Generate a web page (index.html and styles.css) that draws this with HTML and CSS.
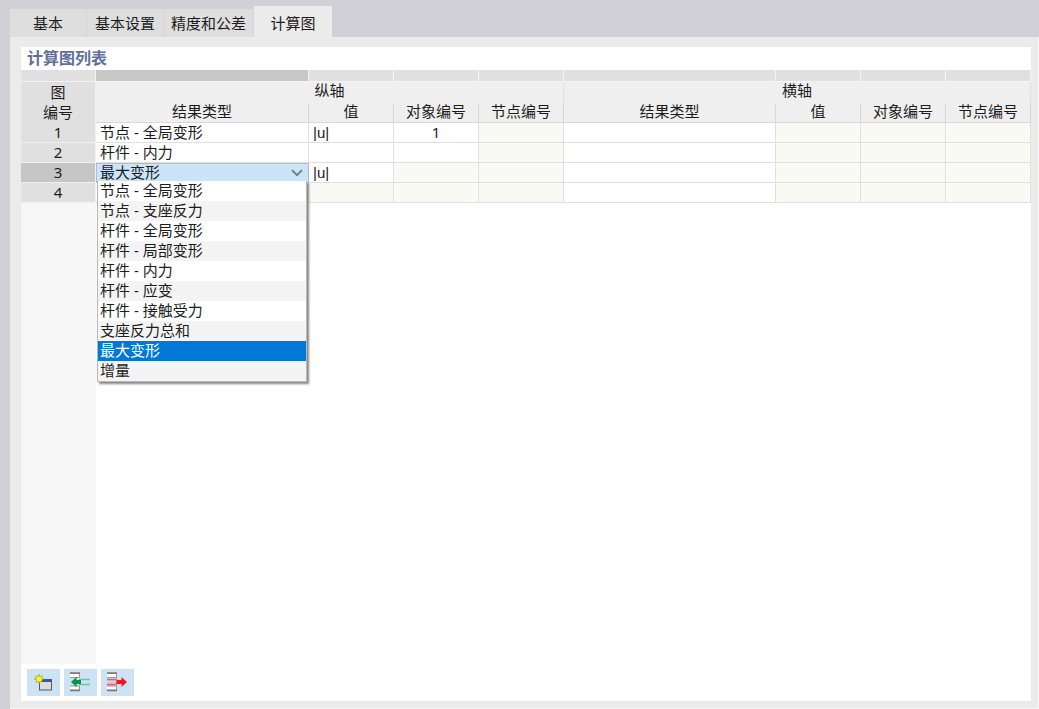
FILE: index.html
```html
<!DOCTYPE html>
<html lang="zh-CN">
<head>
<meta charset="utf-8">
<title>计算图</title>
<link rel="stylesheet" href="styles.css">
</head>
<body>
<div class="tabs" role="tablist">
  <button class="tab" role="tab">基本</button>
  <button class="tab" role="tab">基本设置</button>
  <button class="tab" role="tab">精度和公差</button>
  <button class="tab tab-active" role="tab" aria-selected="true">计算图</button>
</div>
<main class="page">
  <section class="panel">
    <h1 class="title">计算图列表</h1>
    <div class="grid-area">
      <table class="grid">
        <colgroup>
          <col class="c-no"><col class="c-first"><col class="c-val"><col class="c-val"><col class="c-val">
          <col class="c-type"><col class="c-val"><col class="c-val"><col class="c-val">
        </colgroup>
        <thead>
          <tr class="strip"><td></td><td class="current"></td><td></td><td></td><td></td><td></td><td></td><td></td><td></td></tr>
          <tr class="group"><th class="no" rowspan="2">图<br>编号</th><th colspan="4">纵轴</th><th colspan="4">横轴</th></tr>
          <tr class="names"><th>结果类型</th><th>值</th><th>对象编号</th><th>节点编号</th><th>结果类型</th><th>值</th><th>对象编号</th><th>节点编号</th></tr>
        </thead>
        <tbody>
          <tr><th class="no">1</th><td>节点 - 全局变形</td><td class="symbol">|u|</td><td class="center">1</td><td class="off"></td><td></td><td class="off"></td><td class="off"></td><td class="off"></td></tr>
          <tr><th class="no">2</th><td>杆件 - 内力</td><td></td><td></td><td class="off"></td><td></td><td class="off"></td><td class="off"></td><td class="off"></td></tr>
          <tr>
            <th class="no no-current">3</th>
            <td class="edit">
              <select class="combo" aria-label="结果类型"><option>最大变形</option></select>
              <svg class="chevron" width="12" height="8" viewBox="0 0 12 8"><path d="M1 1.2 6 6.2 11 1.2" fill="none" stroke="#707a84" stroke-width="1.8"/></svg>
              <ul class="menu" role="listbox" aria-label="结果类型">
                <li role="option">节点 - 全局变形</li>
                <li role="option">节点 - 支座反力</li>
                <li role="option">杆件 - 全局变形</li>
                <li role="option">杆件 - 局部变形</li>
                <li role="option">杆件 - 内力</li>
                <li role="option">杆件 - 应变</li>
                <li role="option">杆件 - 接触受力</li>
                <li role="option">支座反力总和</li>
                <li role="option" class="chosen" aria-selected="true">最大变形</li>
                <li role="option">增量</li>
              </ul>
            </td>
            <td class="symbol">|u|</td><td class="off"></td><td class="off"></td><td></td><td class="off"></td><td class="off"></td><td class="off"></td>
          </tr>
          <tr><th class="no">4</th><td></td><td class="off"></td><td class="off"></td><td class="off"></td><td></td><td class="off"></td><td class="off"></td><td class="off"></td></tr>
        </tbody>
      </table>
    </div>
    <div class="toolbar">
      <button class="tool" aria-label="新建">
        <svg width="33" height="27" viewBox="0 0 33 27">
          <rect x="12.500" y="10.500" width="12" height="10.500" fill="#dcdcdc" stroke="#55585f"/>
          <path d="M12 10h13v3H12z" fill="#3f568f"/>
          <path d="M12 5.500v9M7.500 10h9M9 7l6 6M15 7l-6 6" stroke="#b0a52c" stroke-width="1.800"/>
          <circle cx="12" cy="10" r="2.800" fill="#fbee3a"/>
        </svg>
      </button>
      <button class="tool" aria-label="插入行">
        <svg width="33" height="27" viewBox="0 0 33 27">
          <path d="M6 4.500h9.500v4H6M6 21h9.500v-4H6" fill="#fff" stroke="#969696"/>
          <path d="M6 4h10M6 21.500h10" stroke="#777" stroke-width="1.600"/>
          <path d="M15 10.500h11M15 15.500h11" stroke="#6fc69b" stroke-width="1.300"/>
          <path d="M7 13l5.500-5v3H17v4h-4.500v3z" fill="#079447"/>
        </svg>
      </button>
      <button class="tool" aria-label="删除行">
        <svg width="33" height="27" viewBox="0 0 33 27">
          <path d="M6 4.500h9.500v4H6M6 21h9.500v-4H6" fill="#fff" stroke="#969696"/>
          <path d="M6 4h10M6 21.500h10" stroke="#777" stroke-width="1.600"/>
          <path d="M6 10.500h9.500v5H6" fill="#d4d0df" stroke="#e0606a" stroke-width="1.300"/>
          <path d="M26 13l-5.500-5v3H16v4h4.500v3z" fill="#f5161c"/>
        </svg>
      </button>
    </div>
  </section>
</main>
</body>
</html>
```
FILE: styles.css
```css
* { box-sizing: border-box; }

body {
  margin: 0;
  height: 100vh;
  padding: 6px 0 0 10px;
  display: flex;
  flex-direction: column;
  background: #d1d0d6;
  color: #1c1c1c;
  font: 15px/20px "Noto Sans", "Noto Sans CJK SC", sans-serif;
}

button, select { font: inherit; color: inherit; }

.tabs { display: flex; align-items: flex-end; }

.tab {
  min-width: 77px;
  height: 28px;
  padding: 0 7px;
  border: 0;
  border-right: 1px solid #d5d5d5;
  background: #dedede;
}

.tab-active {
  min-width: 78px;
  height: 31px;
  padding-top: 2px;
  border-right: 0;
  background: #ebebeb;
}

.page {
  flex: 1;
  display: flex;
  padding: 10px 7px 7px 11px;
  background: #ebebeb;
  border: solid #f8f8f8;
  border-width: 0 1px 1px 0;
}

.panel {
  flex: 1;
  display: flex;
  flex-direction: column;
  background: #fff;
}

.title {
  margin: 0;
  padding: 0 6px;
  font-size: 16px;
  line-height: 23px;
  font-weight: 700;
  color: #5f7099;
}

.grid-area {
  flex: 1;
  background: linear-gradient(to right, #f7f7f7 75px, transparent 75px);
}

.grid {
  width: 100%;
  table-layout: fixed;
  border-collapse: separate;
  border-spacing: 0;
}

.c-no { width: 75px; }
.c-first { width: 213px; }
.c-type { width: 212px; }
.c-val { width: 85px; }

.grid th, .grid td {
  height: 20px;
  padding: 0 4px;
  line-height: 19px;
  font-weight: 400;
  text-align: left;
  white-space: nowrap;
  border: solid #e0e0e0;
  border-width: 0 1px 1px 0;
  background: #fff;
}

.grid .strip td {
  height: 12px;
  background: #e0e0e0;
  border-color: #f4f4f4;
}

.grid .strip .current { background: #c7c7c7; }

.grid thead th {
  background: #efefef;
  text-align: center;
  vertical-align: top;
  line-height: 17px;
}
.grid .group th { height: 21px; border-bottom: 0; }
.grid .names th { border-color: #d8d8d8; }

.grid .no, .grid .group .no {
  background: #e0e0e0;
  text-align: center;
  border-color: #f0f0f0;
  border-bottom-width: 1px;
}

.grid .group .no { line-height: 20px; }
.grid .no-current { background: #c6c6c6; }
.grid .off { background: #f9faf4; }
.grid .center { text-align: center; }
.grid .symbol { font-family: "Liberation Sans", sans-serif; }

.grid .edit {
  position: relative;
  padding: 0;
  background: #cce4f7;
  border-color: #b5b5ea;
}

.combo {
  display: block;
  width: 100%;
  height: 19px;
  padding: 0 4px;
  border: 0;
  appearance: none;
  background: transparent;
  line-height: 19px;
  box-shadow: inset 1px 1px #b5b5ea;
}

.chevron {
  position: absolute;
  right: 5px;
  top: 6px;
  pointer-events: none;
}

.menu {
  position: absolute;
  z-index: 1;
  top: 18px;
  left: 1px;
  right: 1px;
  margin: 0;
  padding: 0;
  list-style: none;
  background: #fff;
  border: solid #b8b8b8;
  border-width: 0 1px 1px;
  box-shadow: 2px 2px 2px #888;
  clip-path: inset(0 -6px -6px 0);
}

.menu li { padding: 0 2px; line-height: 19px; height: 20px; }
.menu li:nth-child(even) { background: #f4f4f4; }
.menu .chosen { background: #0078d7; color: #fff; }

.toolbar { display: flex; gap: 4px; padding: 5px 6px; }

.tool {
  width: 33px;
  height: 27px;
  padding: 0;
  border: 0;
  background: #cce3f6;
}

.tool svg { display: block; }
```
